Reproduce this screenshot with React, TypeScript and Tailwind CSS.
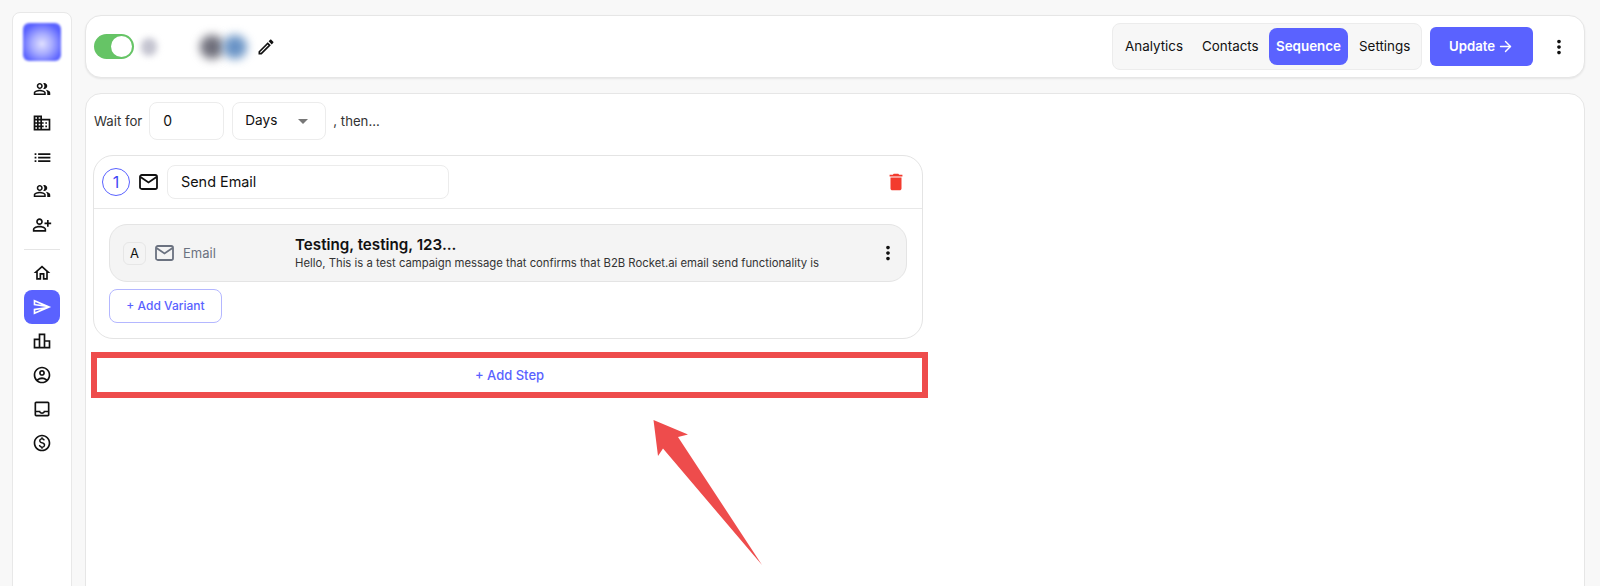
import React from "react";
import {
  MdOutlinePeopleAlt, MdDomain, MdList, MdOutlinePersonAddAlt, MdOutlineHome,
  MdOutlineSend, MdOutlineLeaderboard, MdOutlineAccountCircle, MdOutlineInbox, MdOutlinePaid,
  MdOutlineEdit, MdDelete, MdMoreVert, MdArrowDropDown,
} from "react-icons/md";
import { LuArrowRight } from "react-icons/lu";

const NavItem = ({ icon: Icon, active, size = 20 }: { icon: React.ComponentType<{ size?: number; className?: string }>; active?: boolean; size?: number }) => (
  <div className={`w-9 h-[34px] flex items-center justify-center rounded-lg ${active ? "bg-[#5a62ff] text-white" : "text-[#111]"}`}>
    <Icon size={size} />
  </div>
);

const Mail = ({ className }: { className: string }) => (
  <svg className={className} width="19" height="16" viewBox="0 0 19 16" fill="none" stroke="currentColor" strokeWidth="1.8">
    <rect x="1" y="1" width="17" height="14" rx="1.8" />
    <path d="M1.5 3 L9.5 8.5 L17.5 3" />
  </svg>
);

export default function App() {
  return (
    <div className="relative h-[586px] overflow-hidden bg-[#f8f8f8] flex font-['Inter',sans-serif] text-[#111]">
      <aside className="ml-3 mt-3 w-[60px] h-[620px] shrink-0 bg-white border border-[#e8e8e8] rounded-lg flex flex-col items-center pt-[10px]">
        <div className="w-[38px] h-[38px] rounded-md bg-[radial-gradient(circle_at_50%_55%,#e0e0ff_0%,#a9adff_35%,#5a62ff_75%)] blur-[1px] mb-[11px]" />
        <NavItem icon={MdOutlinePeopleAlt} size={18} />
        <NavItem icon={MdDomain} />
        <NavItem icon={MdList} size={21} />
        <NavItem icon={MdOutlinePeopleAlt} size={18} />
        <NavItem icon={MdOutlinePersonAddAlt} />
        <div className="w-9 h-px bg-[#e5e5e5] mt-[7px] mb-[6px]" />
        <NavItem icon={MdOutlineHome} />
        <NavItem icon={MdOutlineSend} active size={20} />
        <NavItem icon={MdOutlineLeaderboard} />
        <NavItem icon={MdOutlineAccountCircle} />
        <NavItem icon={MdOutlineInbox} />
        <NavItem icon={MdOutlinePaid} />
      </aside>

      <main className="ml-[13px] mt-[15px] w-[1500px] shrink-0 flex flex-col gap-[15px]">
        <header className="h-[63px] shrink-0 bg-white border border-[#e6e6e6] rounded-2xl shadow-[0_1px_2px_rgba(0,0,0,0.08)] flex items-center pl-2 pr-[14px]">
          <div className="w-10 h-[25px] rounded-full bg-[#66c466] flex items-center justify-end pr-[2px]">
            <div className="w-[21px] h-[21px] rounded-full bg-white" />
          </div>
          <div className="ml-[7px] w-[16px] h-[18px] rounded-full bg-[#c4c4d0] blur-[3px]" />
          <div className="ml-[43px] w-[24px] h-[24px] rounded-full bg-[#70707c] blur-[5px]" />
          <div className="-ml-[1px] w-[24px] h-[24px] rounded-full bg-[#6a94c6] blur-[5px]" />
          <MdOutlineEdit size={20} className="ml-[9px] text-[#111]" />

          <div className="ml-auto h-[47px] bg-[#f7f7f7] border border-[#ececec] rounded-lg flex items-center pl-3 pr-[10px] text-[13.4px]">
            <span className="w-[58px]">Analytics</span>
            <span className="ml-[19px] w-[56px]">Contacts</span>
            <span className="ml-[11px] w-[79px] h-[37px] flex items-center justify-center bg-[#5a62ff] text-white font-semibold rounded-lg">Sequence</span>
            <span className="ml-[11px] w-[52px]">Settings</span>
          </div>
          <button className="ml-2 w-[103px] h-[39px] bg-[#5a62ff] text-white text-[13.2px] font-semibold rounded-md flex items-center justify-center gap-[2px]">
            Update <LuArrowRight size={17} />
          </button>
          <MdMoreVert size={22} className="ml-[15px] text-[#111]" />
        </header>

        <section className="h-[600px] shrink-0 bg-white border border-[#e6e6e6] rounded-2xl pl-[7px] pt-2 text-sm">
          <div className="flex items-center">
            <span className="ml-px text-[13.2px] text-[#333] mr-[7px]">Wait for</span>
            <div className="w-[75px] h-[38px] border border-[#ececec] rounded-lg pl-[13px] flex items-center">0</div>
            <div className="ml-2 w-[94px] h-[38px] border border-[#ececec] rounded-lg pl-3 pr-[10px] flex items-center justify-between text-[13.6px]">
              Days <MdArrowDropDown size={24} className="text-[#777]" />
            </div>
            <span className="ml-[7px] text-[13.2px] text-[#333]">, then...</span>
          </div>

          <div className="mt-[15px] w-[830px] h-[184px] border border-[#e4e4e4] rounded-[20px]">
            <div className="h-[53px] border-b border-[#e8e8e8] flex items-center pl-2 pr-[15px]">
              <div className="w-7 h-7 rounded-full border border-[#5a62ff] text-[#3f48f5] flex items-center justify-center text-base">1</div>
              <Mail className="ml-[9px] text-[#111]" />
              <div className="ml-[9px] w-[282px] h-[34px] border border-[#ececec] rounded-lg pl-[13px] flex items-center text-[14.4px]">Send Email</div>
              <MdDelete size={22} className="ml-auto text-[#f33b2e]" />
            </div>
            <div className="pl-[15px] pr-[15px] pt-[15px]">
              <div className="h-[58px] bg-[#f4f4f4] border border-[#e4e4e4] rounded-[18px] flex items-center pl-[13px] pr-[7px]">
                <div className="w-[23px] h-[23px] border border-[#e6e6e6] rounded-md flex items-center justify-center text-[13px]">A</div>
                <Mail className="ml-[9px] text-[#6b7280]" />
                <span className="ml-[9px] w-[112px] text-[13px] text-[#6b7280]">Email</span>
                <div className="flex-1 min-w-0">
                  <div className="text-[15.2px] leading-5 font-semibold text-[#111]">Testing, testing, 123...</div>
                  <div className="text-[11.3px] leading-4 text-[#333]">Hello, This is a test campaign message that confirms that B2B Rocket.ai email send functionality is</div>
                </div>
                <MdMoreVert size={22} className="text-[#111]" />
              </div>
              <button className="mt-[7px] w-[113px] h-[34px] border border-[#b4b7ff] rounded-lg text-xs font-medium text-[#5a62ff]">+ Add Variant</button>
            </div>
          </div>

          <button className="mt-[13px] -ml-[2px] w-[837px] h-[46px] border-[6px] border-[#ee4c4c] text-[13px] font-medium text-[#5a62ff] flex items-center justify-center">+ Add Step</button>
        </section>
      </main>

      <svg className="absolute left-[650px] top-[415px]" width="115" height="155" viewBox="0 0 115 155">
        <polygon points="3.5,5 38,19.5 28,22 112,150 13,33.5 8,41" fill="#ee4c4c" />
      </svg>
    </div>
  );
}
